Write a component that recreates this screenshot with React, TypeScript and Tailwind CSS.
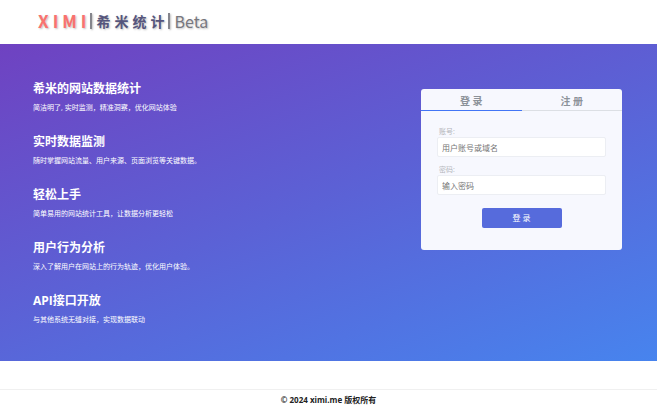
import { useState } from "react";

const features = [
  { title: "希米的网站数据统计", text: "简洁明了, 实时监测，精准洞察，优化网站体验" },
  {
    title: "实时数据监测",
    text: "随时掌握网站流量、用户来源、页面浏览等关键数据。",
  },
  { title: "轻松上手", text: "简单易用的网站统计工具，让数据分析更轻松" },
  {
    title: "用户行为分析",
    text: "深入了解用户在网站上的行为轨迹，优化用户体验。",
  },
  { title: "API接口开放", text: "与其他系统无缝对接，实现数据联动" },
];
const tabs = [
  { value: "login", text: "登 录" },
  { value: "register", text: "注 册" },
];
const fields = [
  { id: "account", type: "text", label: "账号:", placeholder: "用户账号或域名" },
  { id: "password", type: "password", label: "密码:", placeholder: "输入密码" },
];

function Logo() {
  return (
    <a
      href="#"
      className="flex h-5 items-center font-['Noto_Sans_CJK_SC',sans-serif] leading-5 [text-shadow:1px_1px_2px_#00000040]">
      <span className="flex gap-1 text-[17px] font-bold text-[#f9726f]">
        <span>X</span>
        <span>I</span>
        <span>M</span>
        <span>I</span>
      </span>
      <span className="mx-1 h-4 w-0.5 bg-[#85858c] shadow-[1px_1px_2px_#00000040]" />
      <span className="flex gap-1 text-sm leading-5 font-bold text-[#55557c]">
        <span>希</span>
        <span>米</span>
        <span>统</span>
        <span>计</span>
      </span>
      <span className="mx-1 h-4 w-0.5 bg-[#85858c] shadow-[1px_1px_2px_#00000040]" />
      <span className="text-base leading-5 text-[#77777e]">Beta</span>
    </a>
  );
}

function LoginCard() {
  const [tab, setTab] = useState("login");

  return (
    <div className="w-[201px] rounded-[3px] bg-[#f7f8fe] pb-[22px]">
      <div className="flex">
        {tabs.map(x => (
          <button
            key={x.value}
            type="button"
            onClick={() => setTab(x.value)}
            className={`flex-1 border-b pt-[5px] pb-0.5 text-[10px] leading-[14px] font-bold text-[#8c9299] ${
              tab === x.value ? "border-[#4275f5]" : "border-[#dcdfe4]"
            }`}>
            {x.text}
          </button>
        ))}
      </div>
      <form
        onSubmit={e => e.preventDefault()}
        className="flex flex-col px-4 pt-4">
        {fields.map(x => (
          <div key={x.id} className="mb-2 flex flex-col">
            <label
              htmlFor={x.id}
              className="px-0.5 text-[7px] leading-[10px] text-[#b4b6bb]">
              {x.label}
            </label>
            <input
              id={x.id}
              type={x.type}
              placeholder={x.placeholder}
              className="h-5 rounded-xs border border-[#eceef3] bg-white px-1 text-[8px] placeholder:text-[#757575]"
            />
          </div>
        ))}
        <button
          type="submit"
          className="mx-auto mt-[5px] h-5 w-20 rounded-xs bg-[#566bdc] text-[8px] text-white">
          登 录
        </button>
      </form>
    </div>
  );
}

export default function App() {
  return (
    <div className="flex flex-col bg-white font-['Open_Sans','Noto_Sans_CJK_SC',sans-serif]">
      <header className="flex h-11 items-center px-[38px] pb-0.5">
        <Logo />
      </header>
      <main className="flex items-start justify-between bg-[linear-gradient(160deg,#6f42c1,#5b62d6_50%,#4784ee)] px-[33px] pt-9 pb-4">
        <div className="flex flex-col text-white">
          {features.map(x => (
            <section key={x.title} className="pb-5">
              <h2 className="text-xs leading-[18px] font-bold">{x.title}</h2>
              <p className="pt-1 text-[7px] leading-[11px]">{x.text}</p>
            </section>
          ))}
        </div>
        <div className="pt-[9px] pr-0.5">
          <LoginCard />
        </div>
      </main>
      <footer className="mt-7 border-t border-[#f0f0f0] py-1 text-center text-[8px] leading-3 font-bold text-[#222]">
        © 2024 ximi.me 版权所有
      </footer>
    </div>
  );
}
